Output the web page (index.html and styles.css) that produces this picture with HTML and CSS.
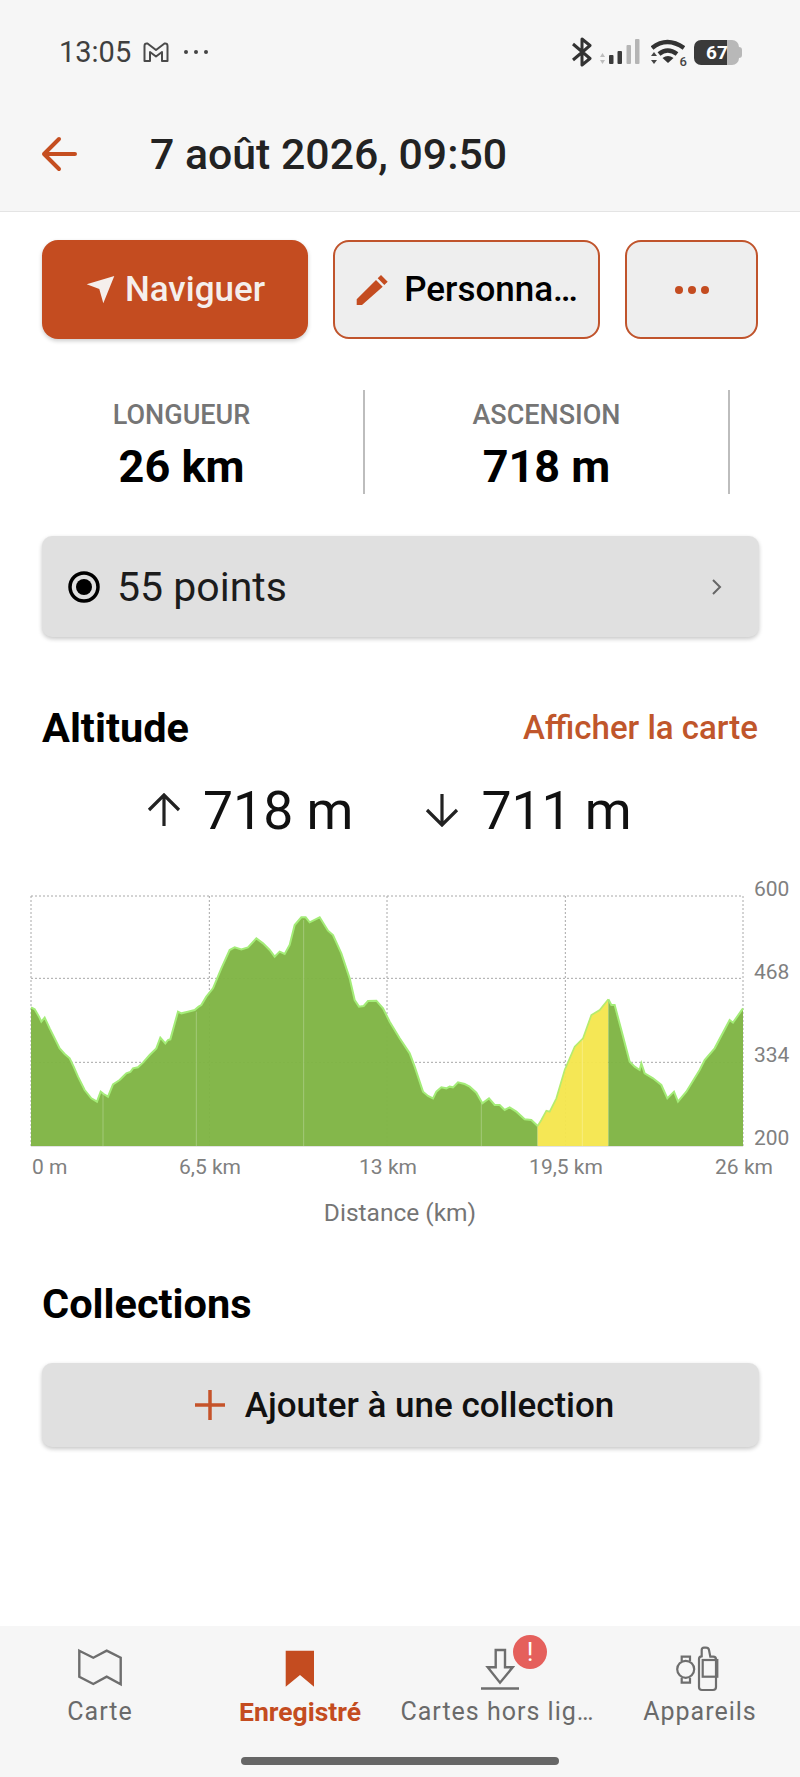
FILE: index.html
```html
<!DOCTYPE html>
<html lang="fr">

<head>
    <meta charset="UTF-8">
    <meta name="viewport" content="width=device-width, initial-scale=1.0">
    <title>Enregistré</title>
    <link rel="stylesheet" href="styles.css">
</head>

<body>

    <header class="app-header">
        <div class="status-bar">
            <div class="status-left">
                <span class="status-time">13:05</span>
                <svg class="status-gmail" width="26" height="21" viewBox="0 0 26 21">
                    <path d="M1.5 4q0-3 3-2.5L13 8l8.500-6.500q3-.5 3 2.500V19h-5.500V10l-6 4.500-6-4.500v9H1.500Z" fill="none" stroke="#4a4a4a" stroke-width="2" stroke-linejoin="round" />
                </svg>
                <svg class="status-dots" width="26" height="6" viewBox="0 0 26 6">
                    <circle cx="3" cy="3" r="2" fill="#444" />
                    <circle cx="13" cy="3" r="2" fill="#444" />
                    <circle cx="23" cy="3" r="2" fill="#444" />
                </svg>
            </div>
            <div class="status-right">
                <svg width="22" height="30" viewBox="0 0 22 30">
                    <path d="M2 7l17 14.500L11 28V2l8 6.500L2 23" fill="none" stroke="#333" stroke-width="3" stroke-linejoin="round" />
                </svg>
                <svg class="status-signal" width="42" height="26" viewBox="0 0 42 26">
                    <path d="M3.500 14l2.500 4H1Z M3.500 25l2.500-4H1Z" fill="#bdbdbd" />
                    <rect x="10" y="16" width="4.500" height="9" rx="1" fill="#3b3b3b" />
                    <rect x="18.500" y="12" width="4.500" height="13" rx="1" fill="#3b3b3b" />
                    <rect x="27.500" y="6" width="4.500" height="19" rx="1" fill="#b5b5b5" />
                    <rect x="36" y="0" width="4.500" height="25" rx="1" fill="#b5b5b5" />
                </svg>
                <div class="status-wifi">
                    <svg width="34" height="26" viewBox="0 0 34 26">
                        <path d="M1 9q15-12 32 0" fill="none" stroke="#333" stroke-width="4.500" />
                        <path d="M8 15q8.500-7 18 0" fill="none" stroke="#333" stroke-width="4.500" />
                        <path d="M11.500 19q5.500-4 11 0l-5.500 5Z" fill="#333" />
                        <path d="M3 13l3 4H0Z M3 25l3-4H0Z" fill="#444" />
                    </svg>
                    <span class="wifi-six">6</span>
                </div>
                <div class="battery">67</div>
            </div>
        </div>
        <div class="toolbar">
            <svg class="back-arrow" width="36" height="36" viewBox="0 0 36 36">
                <path d="M34 18H3M18 3L3 18l15 15" fill="none" stroke="#c54e20" stroke-width="4" stroke-linecap="round" stroke-linejoin="round" />
            </svg>
            <h1 class="title">7 août 2026, 09:50</h1>
        </div>
    </header>

    <main class="content">
        <div class="actions">
            <button class="btn btn-primary">
                <svg width="30" height="30" viewBox="0 0 30 30">
                    <path d="M1.700 9.300L29.300 1 18.300 28.300 14.300 14Z" fill="#f5efec" />
                </svg>
                Naviguer
            </button>
            <button class="btn btn-outline">
                <svg width="34" height="34" viewBox="0 0 34 34">
                    <path d="M1.700 26.300L21 7l6.700 6.700L7 32H1.700Z M22.700 5.300L26 2l6.700 6.700-3.400 3.300Z" fill="#c44c20" />
                </svg>
                Personna…
            </button>
            <button class="btn btn-more">
                <span class="dot"></span><span class="dot"></span><span class="dot"></span>
            </button>
        </div>

        <div class="stats">
            <div class="stat">
                <div class="stat-label">LONGUEUR</div>
                <div class="stat-value">26 km</div>
            </div>
            <div class="stat">
                <div class="stat-label">ASCENSION</div>
                <div class="stat-value">718 m</div>
            </div>
        </div>

        <div class="card points-card">
            <svg width="34" height="34" viewBox="0 0 34 34">
                <circle cx="17" cy="17" r="14" fill="none" stroke="#000" stroke-width="3.500" />
                <circle cx="17" cy="17" r="8" fill="#000" />
            </svg>
            <span class="points-text">55 points</span>
            <svg class="chevron" width="12" height="18" viewBox="0 0 12 18">
                <path d="M2 2l7 7-7 7" fill="none" stroke="#666" stroke-width="2" />
            </svg>
        </div>

        <div class="section-head">
            <h2>Altitude</h2>
            <a class="map-link" href="#">Afficher la carte</a>
        </div>

        <div class="alt-stats">
            <div class="alt-stat">
                <svg width="34" height="34" viewBox="0 0 34 34">
                    <path d="M17 33V3M2 17L17 2l15 15" fill="none" stroke="#222" stroke-width="3.200" />
                </svg>
                <span>718 m</span>
            </div>
            <div class="alt-stat">
                <svg width="34" height="34" viewBox="0 0 34 34">
                    <path d="M17 1v30M2 17l15 15 15-15" fill="none" stroke="#222" stroke-width="3.200" />
                </svg>
                <span>711 m</span>
            </div>
        </div>

        <div class="chart-wrap">
            <svg class="chart" width="712" height="250" viewBox="94 78 2136 750">
                <!-- grid -->
                <path class="grid-line" d="M94 78H2230M94 325H2230M94 577H2230M94 78V828M629 78V828M1162 78V828M1697 78V828M2230 78V828" />
                <path class="base-line" d="M94 828H2230" />
                <!-- profile -->
                <polygon class="area-green" points="94,828 94,412 105,418 118,440 125,455 135,443 150,475 165,505 180,535 195,552 210,565 222,590 235,620 255,660 275,685 292,695 303,665 312,672 325,680 340,643 360,630 372,618 380,610 392,606 400,595 415,592 430,578 450,555 470,535 482,503 497,520 505,510 512,508 535,425 545,430 565,425 585,420 597,410 605,405 620,380 640,355 665,295 690,240 705,232 725,238 745,232 770,205 790,220 810,240 825,260 840,245 855,252 870,225 885,165 905,142 918,142 930,157 960,142 985,182 1000,195 1025,250 1050,325 1065,390 1078,410 1092,408 1105,393 1130,392 1150,415 1170,455 1200,505 1230,550 1245,590 1270,665 1285,678 1300,685 1310,665 1325,652 1340,655 1350,650 1360,652 1375,637 1395,642 1410,650 1430,668 1448,700 1468,685 1485,705 1500,705 1515,720 1530,712 1550,725 1575,748 1595,750 1614,768 1614,828" />
                <polygon class="area-yellow" points="1614,828 1614,768 1625,750 1640,722 1650,725 1670,685 1695,600 1725,530 1750,505 1775,435 1800,420 1826,388 1826,828" />
                <polygon class="area-green" points="1826,828 1826,388 1835,405 1845,405 1865,480 1890,575 1905,590 1920,600 1925,580 1935,610 1960,625 1985,645 2003,685 2023,665 2035,695 2060,665 2100,600 2115,570 2145,535 2190,450 2200,458 2230,415 2230,828" />
                <polyline class="edge-green" points="94,412 105,418 118,440 125,455 135,443 150,475 165,505 180,535 195,552 210,565 222,590 235,620 255,660 275,685 292,695 303,665 312,672 325,680 340,643 360,630 372,618 380,610 392,606 400,595 415,592 430,578 450,555 470,535 482,503 497,520 505,510 512,508 535,425 545,430 565,425 585,420 597,410 605,405 620,380 640,355 665,295 690,240 705,232 725,238 745,232 770,205 790,220 810,240 825,260 840,245 855,252 870,225 885,165 905,142 918,142 930,157 960,142 985,182 1000,195 1025,250 1050,325 1065,390 1078,410 1092,408 1105,393 1130,392 1150,415 1170,455 1200,505 1230,550 1245,590 1270,665 1285,678 1300,685 1310,665 1325,652 1340,655 1350,650 1360,652 1375,637 1395,642 1410,650 1430,668 1448,700 1468,685 1485,705 1500,705 1515,720 1530,712 1550,725 1575,748 1595,750 1614,768" />
                <polyline class="edge-yellow" points="1614,768 1625,750 1640,722 1650,725 1670,685 1695,600 1725,530 1750,505 1775,435 1800,420 1826,388" />
                <polyline class="edge-green" points="1826,388 1835,405 1845,405 1865,480 1890,575 1905,590 1920,600 1925,580 1935,610 1960,625 1985,645 2003,685 2023,665 2035,695 2060,665 2100,600 2115,570 2145,535 2190,450 2200,458 2230,415" />
                <path class="split-line" d="M310 670V828M590 425V828M912 150V828M1445 700V828M1748 510V828" />
            </svg>
            <div class="y-axis">
                <span>600</span>
                <span>468</span>
                <span>334</span>
                <span>200</span>
            </div>
        </div>

        <div class="x-axis">
            <span class="x-tick x-first">0 m</span>
            <span class="x-tick">6,5 km</span>
            <span class="x-tick">13 km</span>
            <span class="x-tick">19,5 km</span>
            <span class="x-tick">26 km</span>
        </div>
        <div class="x-title">Distance (km)</div>

        <h2 class="collections-title">Collections</h2>
        <div class="card add-card">
            <svg width="30" height="30" viewBox="0 0 30 30">
                <path d="M15 0V30M0 15H30" fill="none" stroke="#c5532a" stroke-width="3.500" />
            </svg>
            <span>Ajouter à une collection</span>
        </div>
    </main>

    <nav class="tab-bar">
        <div class="tabs">
            <div class="tab">
                <svg class="tab-icon" width="48" height="46" viewBox="0 0 48 46">
                    <path d="M3.300 4.700L17.300 11.700 30.700 4.700 44.700 11.700V38.300L30.700 30.700 17.300 38 3.300 30.700Z" fill="none" stroke="#6e6e6e" stroke-width="2.400" />
                </svg>
                <span class="tab-label">Carte</span>
            </div>
            <div class="tab tab-active">
                <svg class="tab-icon" width="48" height="46" viewBox="0 0 48 46">
                    <path d="M9.700 4.700H38V40.700L24 29 9.700 40.700Z" fill="#c44c20" />
                </svg>
                <span class="tab-label">Enregistré</span>
            </div>
            <div class="tab">
                <div class="tab-icon-box">
                    <svg class="tab-icon" width="48" height="46" viewBox="0 0 48 46">
                        <path d="M19.700 4H29V21.300H36.700L24 36.700 11.700 21.300H19.700Z" fill="none" stroke="#6e6e6e" stroke-width="2.400" />
                        <path d="M5 42.500H43" fill="none" stroke="#6e6e6e" stroke-width="2.600" />
                    </svg>
                    <span class="badge">!</span>
                </div>
                <span class="tab-label tab-label-long">Cartes hors lig…</span>
            </div>
            <div class="tab">
                <svg class="tab-icon" width="48" height="46" viewBox="0 0 48 46">
                    <circle cx="9.700" cy="23.300" r="8.500" fill="none" stroke="#6e6e6e" stroke-width="2.200" />
                    <path d="M5.700 15V10.700H14V15M5.700 31.700V36.700H14V31.700" fill="none" stroke="#6e6e6e" stroke-width="2.200" />
                    <path d="M23 13q0-2.500 2.700-2.700V4q0-2.300 2.300-2.300h2q2.500 0 3 2.300l1.300 6.700h3q2.700 0 2.700 2.700V41q0 3-3 3H26q-3 0-3-3Z" fill="none" stroke="#6e6e6e" stroke-width="2.200" />
                    <rect x="26.700" y="14" width="14.600" height="16.700" fill="none" stroke="#6e6e6e" stroke-width="2.200" />
                </svg>
                <span class="tab-label">Appareils</span>
            </div>
        </div>
        <div class="home-bar"></div>
    </nav>

</body>

</html>
```

FILE: styles.css
```css
/* Resetting basic styles */
* {
    margin: 0;
    padding: 0;
    box-sizing: border-box;
}

body {
    width: 800px;
    height: 1777px;
    display: flex;
    flex-direction: column;
    font-family: Roboto, sans-serif;
    background: #fff;
    color: #000;
    overflow: hidden;
}

/* Header */
.app-header {
    height: 212px;
    background: #f6f6f6;
    border-bottom: 1px solid #e4e4e4;
}

.status-bar {
    height: 104px;
    padding: 0 58px 0 59px;
    display: flex;
    align-items: center;
    justify-content: space-between;
}

.status-left {
    display: flex;
    align-items: center;
}

.status-time {
    font-size: 29px;
    color: #3f3f3f;
}

.status-gmail {
    margin-left: 12px;
}

.status-dots {
    margin-left: 14px;
}

.status-right {
    display: flex;
    align-items: center;
}

.status-signal {
    margin-left: 5px;
    width: 44px;
}

.status-wifi {
    margin-left: 9px;
    position: relative;
    display: flex;
}

.wifi-six {
    position: absolute;
    right: -2px;
    bottom: -4px;
    font-size: 13px;
    font-weight: 500;
    color: #444;
}

.battery {
    width: 45px;
    height: 25px;
    margin-left: 9px;
    margin-right: 3px;
    padding-left: 12px;
    position: relative;
    border-radius: 7px;
    background: linear-gradient(90deg, #3a3a3a 33px, #b8b8b8 33px);
    color: #fff;
    font-size: 19px;
    font-weight: 700;
    line-height: 25px;
}

.battery::after {
    content: "";
    position: absolute;
    right: -3px;
    top: 7px;
    width: 3px;
    height: 11px;
    border-radius: 0 3px 3px 0;
    background: #b8b8b8;
}

.toolbar {
    height: 100px;
    padding-left: 41px;
    display: flex;
    align-items: center;
}

.title {
    margin-left: 73px;
    font-size: 42.800px;
    font-weight: 500;
    color: #222;
}

/* Action buttons */
.content {
    flex: 1;
}

.actions {
    padding: 28px 41px 0 42px;
    display: flex;
    gap: 25px;
}

.btn {
    height: 99px;
    border-radius: 16px;
    font-family: inherit;
    font-size: 35px;
    font-weight: 480;
    display: flex;
    align-items: center;
    justify-content: center;
}

.btn-primary {
    width: 266px;
    gap: 10px;
    border: none;
    background: #c44c20;
    color: #f5efec;
    box-shadow: 0 2px 4px rgba(0, 0, 0, 0.2);
}

.btn-outline {
    width: 267px;
    gap: 15px;
    border: 2px solid #c0542c;
    background: #eeeeee;
    color: #000;
}

.btn-more {
    width: 133px;
    gap: 5px;
    border: 2px solid #c0542c;
    background: #eeeeee;
}

.dot {
    width: 8px;
    height: 8px;
    border-radius: 50%;
    background: #c44c20;
}

/* Stats */
.stats {
    margin-top: 51px;
    display: flex;
}

.stat {
    width: 365px;
    height: 104px;
    border-right: 2px solid #bdbdbd;
    text-align: center;
}

.stat-label {
    font-size: 27px;
    font-weight: 500;
    line-height: 50px;
    color: #757575;
}

.stat-value {
    margin-top: 2px;
    font-size: 45px;
    font-weight: 700;
    line-height: 50px;
}

/* Cards */
.card {
    margin: 0 41px 0 42px;
    border-radius: 10px;
    background: #e0e0e0;
    box-shadow: 0 2px 4px rgba(0, 0, 0, 0.22);
    display: flex;
    align-items: center;
}

.points-card {
    height: 101px;
    margin-top: 42px;
    padding: 0 36px 0 25px;
}

.points-text {
    margin-left: 16px;
    font-size: 41px;
    color: #1c1c1c;
    flex: 1;
}

/* Altitude */
.section-head {
    margin-top: 68px;
    padding: 0 42px;
    height: 44px;
    display: flex;
    align-items: center;
    justify-content: space-between;
}

h2 {
    font-size: 41.500px;
    font-weight: 700;
}

.map-link {
    font-size: 33px;
    font-weight: 500;
    color: #c0562b;
    text-decoration: none;
}

.alt-stats {
    margin-top: 31px;
    height: 60px;
    padding-left: 147px;
    display: flex;
    gap: 72px;
}

.alt-stat {
    display: flex;
    align-items: center;
    gap: 22px;
    font-size: 53.500px;
    color: #111;
}

.chart-wrap {
    margin-top: 56px;
    height: 250px;
    padding-left: 31px;
    display: flex;
    align-items: flex-start;
}

.chart {
    overflow: visible;
}

.grid-line {
    fill: none;
    stroke: #a8a8a8;
    stroke-width: 3;
    stroke-dasharray: 6 6;
}

.base-line {
    fill: none;
    stroke: #c8c8c8;
    stroke-width: 3;
}

.area-green {
    fill: #7fb444;
    fill-opacity: 0.96;
}

.area-yellow {
    fill: #f5e64e;
    fill-opacity: 0.96;
}

.edge-green {
    fill: none;
    stroke: #a4ec78;
    stroke-width: 6;
}

.edge-yellow {
    fill: none;
    stroke: #b5ec6e;
    stroke-width: 5;
}

.split-line {
    fill: none;
    stroke: rgba(255, 255, 255, 0.25);
    stroke-width: 3;
}

.y-axis {
    height: 279px;
    margin-top: -22px;
    margin-left: 11px;
    display: flex;
    flex-direction: column;
    justify-content: space-between;
    font-size: 21px;
    line-height: 30px;
    color: #808080;
}

.x-axis {
    margin-top: 6px;
    padding-left: 31px;
    height: 30px;
    display: flex;
    font-size: 21px;
    line-height: 30px;
    color: #808080;
}

.x-tick {
    width: 0;
    margin-right: 178px;
    flex: none;
    display: flex;
    justify-content: center;
    white-space: nowrap;
}

.x-first {
    justify-content: flex-start;
    padding-left: 1px;
}

.x-title {
    margin-top: 16px;
    line-height: 30px;
    text-align: center;
    font-size: 24.500px;
    color: #757575;
}

/* Collections */
.collections-title {
    margin-top: 54px;
    padding-left: 42px;
    line-height: 44px;
}

.add-card {
    height: 84px;
    margin-top: 37px;
    padding-left: 8px;
    gap: 20px;
    justify-content: center;
    font-size: 35px;
    font-weight: 480;
    color: #111;
}

/* Bottom navigation */
.tab-bar {
    height: 151px;
    padding-top: 20px;
    background: #f6f6f6;
}

.tabs {
    display: grid;
    grid-template-columns: repeat(4, 200px);
}

.tab {
    display: flex;
    flex-direction: column;
    align-items: center;
}

.tab-icon {
    display: block;
}

.tab-icon-box {
    position: relative;
}

.tab-label {
    margin-top: 4px;
    font-size: 25px;
    line-height: 32px;
    letter-spacing: 1px;
    color: #6a6a6a;
    white-space: nowrap;
}

.tab-label-long {
    margin-right: 5px;
}

.tab-active .tab-label {
    font-size: 26.500px;
    font-weight: 700;
    letter-spacing: 0;
    color: #c44c20;
}

.badge {
    position: absolute;
    left: 37px;
    top: -11px;
    width: 34px;
    height: 34px;
    border-radius: 50%;
    background: #e5605c;
    color: #fff;
    font-size: 26px;
    line-height: 34px;
    text-align: center;
}

.home-bar {
    width: 318px;
    height: 8px;
    margin: 29px auto 0;
    border-radius: 4px;
    background: #666;
}
```
